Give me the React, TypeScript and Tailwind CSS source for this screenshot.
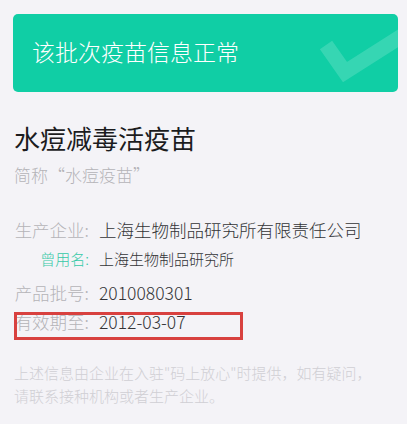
import React from 'react';

const ROWS = [
  { label: '生产企业:', value: '上海生物制品研究所有限责任公司' },
  { label: '产品批号:', value: '2010080301' },
  { label: '有效期至:', value: '2012-03-07' },
];

export default function App() {
  const font = { fontFamily: '"Noto Sans CJK SC", "Noto Sans", sans-serif' };

  return (
    <div className="min-h-screen w-full bg-[#f4f3f7] overflow-hidden font-light" style={font}>
      {/* Status banner */}
      <div className="relative ml-[13px] mt-[14px] w-[385px] h-[78px] rounded-[5px] bg-[#10cea5] overflow-hidden flex items-center pl-[19px] pb-[3px]">
        <span className="text-[23px] leading-[23px] text-white">该批次疫苗信息正常</span>
        <svg className="absolute left-0 top-0" width="385" height="78" viewBox="0 0 385 78">
          <polyline
            points="313,31 332,58 392,20"
            fill="none"
            stroke="white"
            strokeOpacity="0.16"
            strokeWidth="15"
            strokeLinejoin="miter"
            strokeLinecap="butt"
          />
        </svg>
      </div>

      <div className="relative px-[14px]">
        <h1 className="mt-[33px] text-[26px] leading-[26px] font-normal text-[#1c1c1e]">水痘减毒活疫苗</h1>
        <p className="mt-[15px] text-[17px] leading-[17px] text-[#b4b3b8] whitespace-nowrap">
          简称<span className="inline-block w-[17px] text-center">“</span>水痘疫苗<span className="inline-block w-[17px] text-center">”</span>
        </p>

        <div className="mt-[38px] flex items-center gap-[10px] text-[17.5px] leading-[18px]">
          <span className="w-[75px] text-right text-[#b4b3b8] whitespace-nowrap">{ROWS[0].label}</span>
          <span className="text-[#333336] whitespace-nowrap">{ROWS[0].value}</span>
        </div>
        <div className="mt-[12px] flex items-center gap-[10px] text-[15px] leading-[15px]">
          <span className="w-[75px] text-right text-[#34c9a7] whitespace-nowrap">曾用名:</span>
          <span className="text-[#333336] whitespace-nowrap">上海生物制品研究所</span>
        </div>
        <div className="mt-[18px] flex items-center gap-[10px] text-[17.5px] leading-[18px]">
          <span className="w-[75px] text-right text-[#b4b3b8] whitespace-nowrap">{ROWS[1].label}</span>
          <span className="text-[#333336] whitespace-nowrap">{ROWS[1].value}</span>
        </div>
        <div className="relative mt-[11px] flex items-center gap-[10px] text-[17.5px] leading-[18px]">
          <span className="w-[75px] text-right text-[#b4b3b8] whitespace-nowrap">{ROWS[2].label}</span>
          <span className="text-[#333336] whitespace-nowrap">{ROWS[2].value}</span>
          {/* highlight annotation */}
          <div className="absolute left-0 top-[-1px] w-[229px] h-[28px] border-[3px] border-[#d8413f]" />
        </div>

        <p className="mt-[31px] text-[15px] leading-[22.5px] text-[#d0cfd4]">
          上述信息由企业在入驻"码上放心"时提供，如有疑问，
          <br />
          请联系接种机构或者生产企业。
        </p>
      </div>
    </div>
  );
}
